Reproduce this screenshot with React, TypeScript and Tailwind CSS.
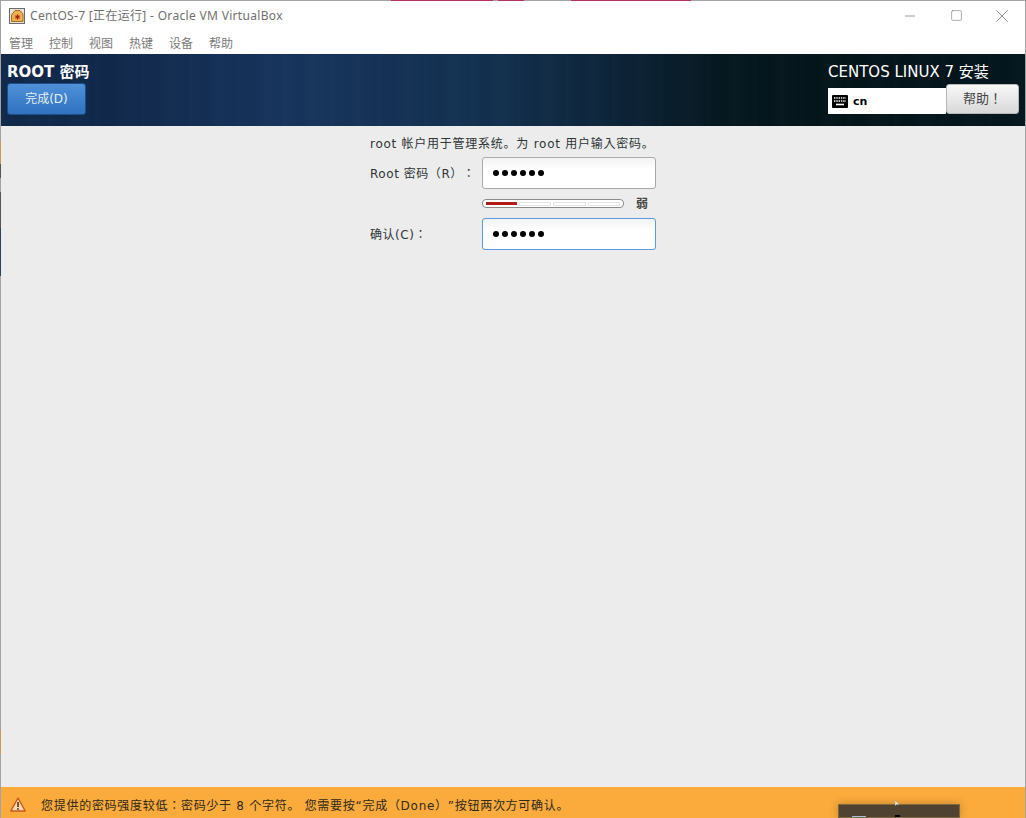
import React from 'react';
import { Minus, Square, X } from 'lucide-react';

const win = 'font-["Noto_Sans","Noto_Sans_CJK_SC",sans-serif]';
const gtk = 'font-["DejaVu_Sans","Noto_Sans_CJK_JP",sans-serif] [text-spacing-trim:space-all]';

const menus = ['管理', '控制', '视图', '热键', '设备', '帮助'];

const AppIcon = () => (
    <svg width="16" height="16" viewBox="0 0 16 16">
        <rect x="0.5" y="0.5" width="15" height="15" fill="#e8e4dc" stroke="#6b6b6b" />
        <path d="M2.5 7 L6 2.5 H11 L14 6 V13.5 H2.5 Z" fill="#f0b050" stroke="#a86a20" />
        <path d="M8.5 6.5 V11.5 M6.3 7.7 L10.7 10.3 M10.7 7.7 L6.3 10.3" stroke="#a02010" strokeWidth="1.2" />
    </svg>
);

const KeyboardIcon = () => (
    <svg width="16" height="13" viewBox="0 0 16 13">
        <rect x="0" y="0" width="16" height="13" rx="1" fill="#000" />
        <path d="M2 3 H14 M2 6 H14" stroke="#fff" strokeWidth="1.4" strokeDasharray="1.4 0.9" />
        <path d="M4 9.5 H12" stroke="#fff" strokeWidth="1.6" />
    </svg>
);

const WarningIcon = () => (
    <svg width="16" height="15" viewBox="0 0 16 15">
        <path d="M8 1 L15.2 14 H0.8 Z" fill="#f4d9b0" stroke="#c8561c" strokeWidth="1.4" strokeLinejoin="round" />
        <path d="M8 5 V10" stroke="#5a3010" strokeWidth="1.6" />
        <circle cx="8" cy="12" r="0.9" fill="#5a3010" />
    </svg>
);

const Dots = () => (
    <div className="flex gap-[3px] pl-[10px]">
        {[0, 1, 2, 3, 4, 5].map((i) => (
            <span key={i} className="size-[6px] rounded-full bg-black" />
        ))}
    </div>
);

const EmptySegment = () => <div className="h-[4px] flex-1 border border-[#e4e4e4] bg-white" />;

export default function App() {
    return (
        <div className={`relative flex h-[818px] w-[1026px] flex-col overflow-hidden bg-white ${win}`}>
            {/* top edge of the window, the desktop shows through */}
            <div className="flex h-px shrink-0 bg-[#a3a3a3]">
                <div className="ml-[391px] w-[102px] bg-[#b5305f]" />
                <div className="ml-[5px] w-[26px] bg-[#b5305f]" />
                <div className="ml-[47px] w-[120px] bg-[#b5305f]" />
            </div>

            <div className="flex min-h-0 flex-1">
                <div className="flex w-px shrink-0 flex-col bg-[#a3a3a3]">
                    <div className="mt-[140px] h-[23px] bg-[#c99a50]" />
                    <div className="h-[14px] bg-[#555]" />
                    <div className="mt-[14px] h-[36px] bg-[#555]" />
                    <div className="h-[48px] bg-[#2c4258]" />
                    <div className="mt-[454px] h-[24px] bg-[#c99a50]" />
                </div>

                <div className="flex min-w-0 flex-1 flex-col">
                    {/* VirtualBox title bar */}
                    <div className="flex h-[29px] shrink-0 items-center pl-[8px]">
                        <AppIcon />
                        <span className="ml-[5px] text-[12px] tracking-[0.32px] text-[#6f6f6f]">CentOS-7 [正在运行] - Oracle VM VirtualBox</span>
                        <div className="ml-auto flex items-center text-[#666]">
                            <div className="flex w-[46px] justify-center"><Minus size={16} strokeWidth={1} /></div>
                            <div className="flex w-[46px] justify-center"><Square size={13} strokeWidth={1} /></div>
                            <div className="flex w-[46px] justify-center"><X size={22} strokeWidth={0.8} /></div>
                        </div>
                    </div>

                    {/* menu bar */}
                    <div className="flex h-[24px] shrink-0 items-center gap-[16px] pl-[8px] pt-[3px] text-[12px] text-[#7a7a7a]">
                        {menus.map((m) => (
                            <span key={m}>{m}</span>
                        ))}
                    </div>

                    {/* installer header, the streaks stand in for the anaconda banner texture */}
                    <div className="flex h-[72px] shrink-0 justify-between bg-[repeating-linear-gradient(90deg,rgba(255,255,255,0.012)_0px,rgba(255,255,255,0)_7px,rgba(0,0,0,0.025)_17px,rgba(255,255,255,0.01)_29px,rgba(0,0,0,0.012)_47px),linear-gradient(90deg,#11294a_0%,#10284a_10%,#17345d_28%,#12304e_48%,#0d2438_60%,#05171f_71%,#04151a_82%,#04161e_100%)] pl-[6px] pr-[6px]">
                        <div className="flex flex-col pt-[8px]">
                            <span className={`text-[15px] leading-[20px] font-bold text-white ${gtk}`}>ROOT 密码</span>
                            <button className={`mt-px h-[32px] w-[79px] rounded-[3px] border border-[#1f4d85] bg-gradient-to-b from-[#4f90d9] to-[#2f72c0] text-[12px] text-[#e8f0fa] ${gtk}`}>
                                完成(D)
                            </button>
                        </div>
                        <div className="flex w-[191px] flex-col">
                            <span className={`pt-[8px] text-[15px] leading-[20px] text-white ${gtk}`}>CENTOS LINUX 7 安装</span>
                            <div className="mt-[2px] flex">
                                <div className="mt-[4px] flex h-[26px] w-[118px] items-center gap-[5px] bg-white pl-[4px]">
                                    <KeyboardIcon />
                                    <span className={`pt-[3px] text-[11px] font-bold text-black ${gtk}`}>cn</span>
                                </div>
                                <button className={`h-[30px] w-[73px] rounded-[3px] border border-[#b8b8b8] bg-gradient-to-b from-[#f8f8f8] to-[#d8d8d8] text-[13px] text-[#444] ${gtk}`}>
                                    帮助！
                                </button>
                            </div>
                        </div>
                    </div>

                    {/* form */}
                    <div className={`flex min-h-0 flex-1 flex-col bg-[#ececec] pl-[369px] pt-[10px] text-[12px] tracking-[0.75px] text-[#2e3436] ${gtk}`}>
                        <p className="leading-[16px]">root 帐户用于管理系统。为 root 用户输入密码。</p>
                        <div className="mt-[5px] flex items-center">
                            <span className="w-[112px] whitespace-nowrap pt-[2px] tracking-[0.55px]">Root 密码（R）：</span>
                            <div className="flex h-[32px] w-[174px] items-center rounded-[3px] border border-[#a9a9a9] bg-gradient-to-b from-[#f3f3f3] to-white to-40%">
                                <Dots />
                            </div>
                        </div>
                        <div className="mt-[10px] flex h-[9px] items-center pl-[112px]">
                            <div className="flex h-[9px] w-[142px] items-center gap-[2px] rounded-[4px] border border-[#8a8a8a] bg-white px-[3px]">
                                <div className="h-[3px] flex-1 bg-[#b41a1a]" />
                                <EmptySegment />
                                <EmptySegment />
                                <EmptySegment />
                            </div>
                            <span className="ml-[12px] leading-none font-bold text-[#444]">弱</span>
                        </div>
                        <div className="mt-[10px] flex items-center">
                            <span className="w-[112px] whitespace-nowrap pt-[2px] tracking-[0.55px]">确认(C)：</span>
                            <div className="flex h-[32px] w-[174px] items-center rounded-[3px] border border-[#5b9ae0] bg-gradient-to-b from-[#f3f3f3] to-white to-40%">
                                <Dots />
                            </div>
                        </div>
                    </div>

                    {/* warning bar */}
                    <div className={`flex h-[31px] shrink-0 items-center bg-[#fbab3c] pl-[9px] pt-[3px] text-[12px] tracking-[0.72px] text-[#2e2a20] ${gtk}`}>
                        <WarningIcon />
                        <span className="ml-[15px] whitespace-nowrap pt-[3px]">您提供的密码强度较低：密码少于 8 个字符。 您需要按“完成（Done）”按钮两次方可确认。</span>
                    </div>
                </div>

                <div className="w-px shrink-0 bg-[#a3a3a3]" />
            </div>

            {/* taskbar preview sneaking in over the bar */}
            <div className="absolute left-[838px] top-[804px] h-[14px] w-[122px] border border-[#7d6840] bg-[#4f4230] shadow-[0_0_8px_rgba(120,80,20,0.45)]">
                <div className="absolute bottom-0 left-[13px] h-px w-[14px] bg-[#9fc4e0]" />
                <div className="absolute bottom-0 left-[56px] h-[2px] w-[5px] bg-black" />
            </div>
            <svg className="absolute left-[895px] top-[800px]" width="5" height="7" viewBox="0 0 5 7">
                <path d="M0 0 V6 L1.5 4.6 H4.5 Z" fill="#e8e8e8" stroke="#777" strokeWidth="0.4" />
            </svg>
        </div>
    );
}
